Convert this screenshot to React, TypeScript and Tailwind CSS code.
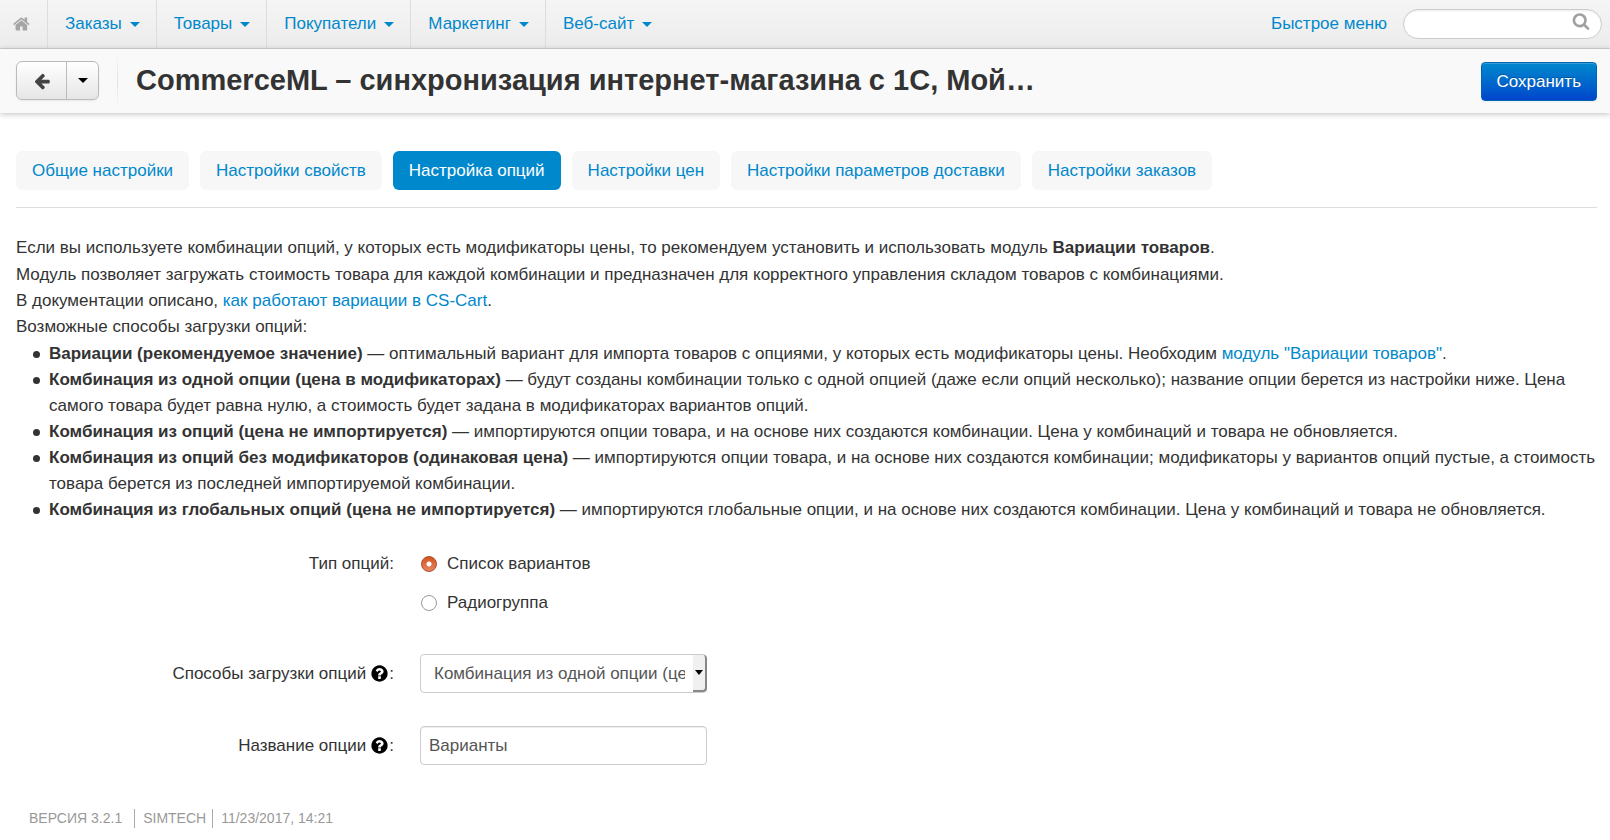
import React from "react";

const iconPaths = {
  home: "M1408 992v480q0 26-19 45t-45 19h-384v-384h-256v384h-384q-26 0-45-19t-19-45v-480q0-1 .5-3t.5-3l575-474 575 474q1 2 1 6zm223-69l-62 74q-8 9-21 11h-3q-13 0-21-7l-692-577-692 577q-12 8-24 7-13-2-21-11l-62-74q-8-10-7-23.5t11-21.5l719-599q32-26 76-26t76 26l244 204v-195q0-14 9-23t23-9h192q14 0 23 9t9 23v408l219 182q10 8 11 21.5t-7 23.5z",
  back: "M1664 896v128q0 53-32.5 90.5t-84.5 37.5h-704l293 294q38 36 38 90t-38 90l-75 76q-37 37-90 37-52 0-91-37l-651-652q-37-37-37-90 0-52 37-91l651-650q38-38 91-38 52 0 90 38l75 74q38 38 38 91t-38 91l-293 293h704q52 0 84.5 37.5t32.5 90.5z",
  help: "M1024 1376v-192q0-14-9-23t-23-9h-192q-14 0-23 9t-9 23v192q0 14 9 23t23 9h192q14 0 23-9t9-23zm256-672q0-88-55.5-163t-138.5-116-170-41q-243 0-371 213-15 24 8 42l132 100q7 6 19 6 16 0 25-12 53-68 86-92 34-24 86-24 48 0 85.5 26t37.5 59q0 38-20 61t-68 45q-63 28-115.5 86.5t-52.5 125.5v36q0 14 9 23t23 9h192q14 0 23-9t9-23q0-19 21.5-49.5t54.5-49.5q32-18 49-28.5t46-35 44.5-48 28-60.5 12.5-81zm384 192q0 209-103 385.5t-279.5 279.5-385.5 103-385.5-103-279.5-279.5-103-385.5 103-385.5 279.5-279.5 385.5-103 385.5 103 279.5 279.5 103 385.5z",
  search:
    "M1216 832q0-185-131.5-316.5t-316.5-131.5-316.5 131.5-131.5 316.5 131.5 316.5 316.5 131.5 316.5-131.5 131.5-316.5zm512 832q0 52-38 90t-90 38q-54 0-90-38l-343-342q-179 124-399 124-143 0-273.5-55.5t-225-150-150-225-55.5-273.5 55.5-273.5 150-225 225-150 273.5-55.5 273.5 55.5 225 150 150 225 55.5 273.5q0 220-124 399l343 343q37 37 37 90z",
};

function Icon({ name, className }: { name: keyof typeof iconPaths; className: string }) {
  return (
    <svg aria-hidden="true" viewBox="0 0 1792 1792" className={className}>
      <path d={iconPaths[name]} fill="currentColor" />
    </svg>
  );
}

function Caret({ className = "" }: { className?: string }) {
  return (
    <svg aria-hidden="true" viewBox="0 0 10 5" className={`h-[5px] w-[10px] shrink-0 ${className}`}>
      <path d="M0 0h10L5 5z" fill="currentColor" />
    </svg>
  );
}

const menu = ["Заказы", "Товары", "Покупатели", "Маркетинг", "Веб-сайт"];

const tabs = [
  "Общие настройки",
  "Настройки свойств",
  "Настройка опций",
  "Настройки цен",
  "Настройки параметров доставки",
  "Настройки заказов",
];

function Link({ children }: { children: React.ReactNode }) {
  return (
    <a href="#" className="text-[#0088cc]">
      {children}
    </a>
  );
}

const methods: { name: string; text: React.ReactNode }[] = [
  {
    name: "Вариации (рекомендуемое значение)",
    text: (
      <>
        оптимальный вариант для импорта товаров с опциями, у которых есть модификаторы цены. Необходим{" "}
        <Link>модуль "Вариации товаров"</Link>.
      </>
    ),
  },
  {
    name: "Комбинация из одной опции (цена в модификаторах)",
    text: "будут созданы комбинации только с одной опцией (даже если опций несколько); название опции берется из настройки ниже. Цена самого товара будет равна нулю, а стоимость будет задана в модификаторах вариантов опций.",
  },
  {
    name: "Комбинация из опций (цена не импортируется)",
    text: "импортируются опции товара, и на основе них создаются комбинации. Цена у комбинаций и товара не обновляется.",
  },
  {
    name: "Комбинация из опций без модификаторов (одинаковая цена)",
    text: "импортируются опции товара, и на основе них создаются комбинации; модификаторы у вариантов опций пустые, а стоимость товара берется из последней импортируемой комбинации.",
  },
  {
    name: "Комбинация из глобальных опций (цена не импортируется)",
    text: "импортируются глобальные опции, и на основе них создаются комбинации. Цена у комбинаций и товара не обновляется.",
  },
];

function Navbar() {
  return (
    <nav className="flex h-[49px] items-stretch border-b border-[#d4d4d4] bg-linear-to-b from-[#f5f5f5] to-[#ececec] pr-2">
      <a
        href="#"
        aria-label="Главная"
        className="flex w-12 items-center justify-center border-r border-[#dddddd] pr-[3px] text-[#a5a5a5]"
      >
        <Icon name="home" className="size-[18px]" />
      </a>
      {menu.map((item) => (
        <a
          key={item}
          href="#"
          className="flex items-center gap-2 border-r border-[#dddddd] pr-4 pl-[17px] text-[#0088cc] last-of-type:border-r-0"
        >
          {item}
          <Caret className="mt-px" />
        </a>
      ))}
      <div className="ml-auto flex items-center gap-4">
        <button type="button" className="text-[#0088cc]">
          Быстрое меню
        </button>
        <div className="relative">
          <input
            type="search"
            aria-label="Поиск"
            className="block h-[30px] w-[199px] rounded-full border border-[#cccccc] bg-white pr-10 pl-4 shadow-[inset_0_1px_2px_rgba(0,0,0,0.08)] outline-none"
          />
          <Icon name="search" className="absolute top-[3px] right-3 size-[18px] text-[#a0a0a0]" />
        </div>
      </div>
    </nav>
  );
}

function TitleBar() {
  return (
    <header className="relative flex h-16 items-center bg-[#f9f9f9] pr-[13px] pl-4 shadow-[0_1px_6px_rgba(0,0,0,0.25)]">
      <div className="mb-px flex h-[39px] overflow-hidden rounded-md border border-[#bbbbbb] bg-linear-to-b from-white to-[#e6e6e6] shadow-[0_1px_2px_rgba(0,0,0,0.08)]">
        <button
          type="button"
          aria-label="Назад"
          className="flex w-[50px] items-center justify-center border-r border-[#bbbbbb] pt-px text-[#444444]"
        >
          <Icon name="back" className="size-[18px]" />
        </button>
        <button type="button" aria-label="Последние страницы" className="flex w-[31px] items-center justify-center text-black">
          <Caret />
        </button>
      </div>
      <div className="ml-[18px] h-13 w-px bg-linear-to-b from-transparent via-[#e0e0e0] to-transparent" />
      <h1 className="ml-[18px] min-w-0 flex-1 truncate text-[29px] font-bold">
        CommerceML – синхронизация интернет-магазина с 1С, Мой…
      </h1>
      <button
        type="button"
        className="h-[39px] rounded border border-[#0066b3] bg-linear-to-b from-[#0088cc] to-[#0044cc] px-[15px] pt-px text-white shadow-[inset_0_1px_0_rgba(255,255,255,0.2),0_1px_2px_rgba(0,0,0,0.05)] [text-shadow:0_-1px_0_rgba(0,0,0,0.25)]"
      >
        Сохранить
      </button>
    </header>
  );
}

function FieldLabel({ htmlFor, children }: { htmlFor: string; children: React.ReactNode }) {
  return (
    <label htmlFor={htmlFor} className="flex w-[378px] items-center justify-end">
      {children}
      <Icon name="help" className="ml-1 size-[19px] text-black" />:
    </label>
  );
}

function Radio({ label, defaultChecked }: { label: string; defaultChecked?: boolean }) {
  return (
    <label className="flex items-center gap-[10px]">
      <input
        type="radio"
        name="option-type"
        defaultChecked={defaultChecked}
        className="size-4 appearance-none rounded-full border border-[#999999] bg-white checked:border-[#a8502c] checked:bg-[radial-gradient(circle,#fff_0_2px,transparent_3px),linear-gradient(#d6531f,#e98560)]"
      />
      {label}
    </label>
  );
}

export default function App() {
  return (
    <div className="font-['Liberation_Sans',Arial,sans-serif] text-[17px] text-[#333333]">
      <Navbar />
      <TitleBar />
      <main className="pr-[13px] pl-4">
        <div className="mt-[38px] flex gap-[11px] border-b border-[#dddddd] pb-[17px]">
          {tabs.map((tab, index) => (
            <a
              key={tab}
              href="#"
              className={
                index === 2
                  ? "flex h-[39px] items-center rounded-md bg-[#0088cc] px-4 text-white"
                  : "flex h-[39px] items-center rounded-md bg-[#f7f7f7] px-4 text-[#0088cc]"
              }
            >
              {tab}
            </a>
          ))}
        </div>

        <div className="mt-[27px] flex flex-col gap-px leading-[26px]">
          <p>
            Если вы используете комбинации опций, у которых есть модификаторы цены, то рекомендуем установить и
            использовать модуль <b>Вариации товаров</b>.
          </p>
          <div>
            <p>
              Модуль позволяет загружать стоимость товара для каждой комбинации и предназначен для корректного
              управления складом товаров с комбинациями.
            </p>
            <p>
              В документации описано, <Link>как работают вариации в CS-Cart</Link>.
            </p>
            <p>Возможные способы загрузки опций:</p>
          </div>
          <ul className="pl-[17px]">
            {methods.map((method) => (
              <li key={method.name} className="flex gap-[9px]">
                <span className="mt-[10px] size-[7px] shrink-0 rounded-full bg-[#333333]" />
                <p>
                  <b>{method.name}</b> — {method.text}
                </p>
              </li>
            ))}
          </ul>
        </div>

        <form className="mt-[21px]">
          <div role="radiogroup" aria-labelledby="option-type" className="flex gap-[27px]">
            <div id="option-type" className="h-[39px] w-[378px] text-right leading-[39px]">
              Тип опций:
            </div>
            <div className="flex flex-col *:h-[39px]">
              <Radio label="Список вариантов" defaultChecked />
              <Radio label="Радиогруппа" />
            </div>
          </div>
          <div className="mt-8 flex items-center gap-[26px]">
            <FieldLabel htmlFor="method">Способы загрузки опций</FieldLabel>
            <div className="relative w-[287px]">
              <select
                id="method"
                className="block h-[39px] w-full appearance-none rounded border border-[#cccccc] bg-white pr-[21px] pl-[13px] text-[#555555] outline-none"
              >
                <option>Комбинация из одной опции (цена в модификаторах)</option>
              </select>
              <span className="pointer-events-none absolute top-px right-0 flex h-[37px] w-[14px] items-center justify-center rounded-r border-r-2 border-b-2 border-[#888888] bg-[#f0f0f0] text-black">
                <svg aria-hidden="true" viewBox="0 0 8 5" className="h-[5px] w-2">
                  <path d="M0 0h8L4 5z" fill="currentColor" />
                </svg>
              </span>
            </div>
          </div>
          <div className="mt-[33px] flex items-center gap-[26px]">
            <FieldLabel htmlFor="name">Название опции</FieldLabel>
            <input
              id="name"
              defaultValue="Варианты"
              className="h-[39px] w-[287px] rounded border border-[#cccccc] bg-white px-2 text-[#555555] shadow-[inset_0_1px_1px_rgba(0,0,0,0.075)] outline-none"
            />
          </div>
        </form>
      </main>

      <footer className="mt-11 flex items-center pl-[29px] text-[14px] leading-[19px] text-[#999999]">
        <span className="border-r border-[#aaaaaa] pr-3">ВЕРСИЯ 3.2.1</span>
        <span className="border-r border-[#aaaaaa] pr-[6px] pl-2">SIMTECH</span>
        <span className="pl-2">11/23/2017, 14:21</span>
      </footer>
    </div>
  );
}
